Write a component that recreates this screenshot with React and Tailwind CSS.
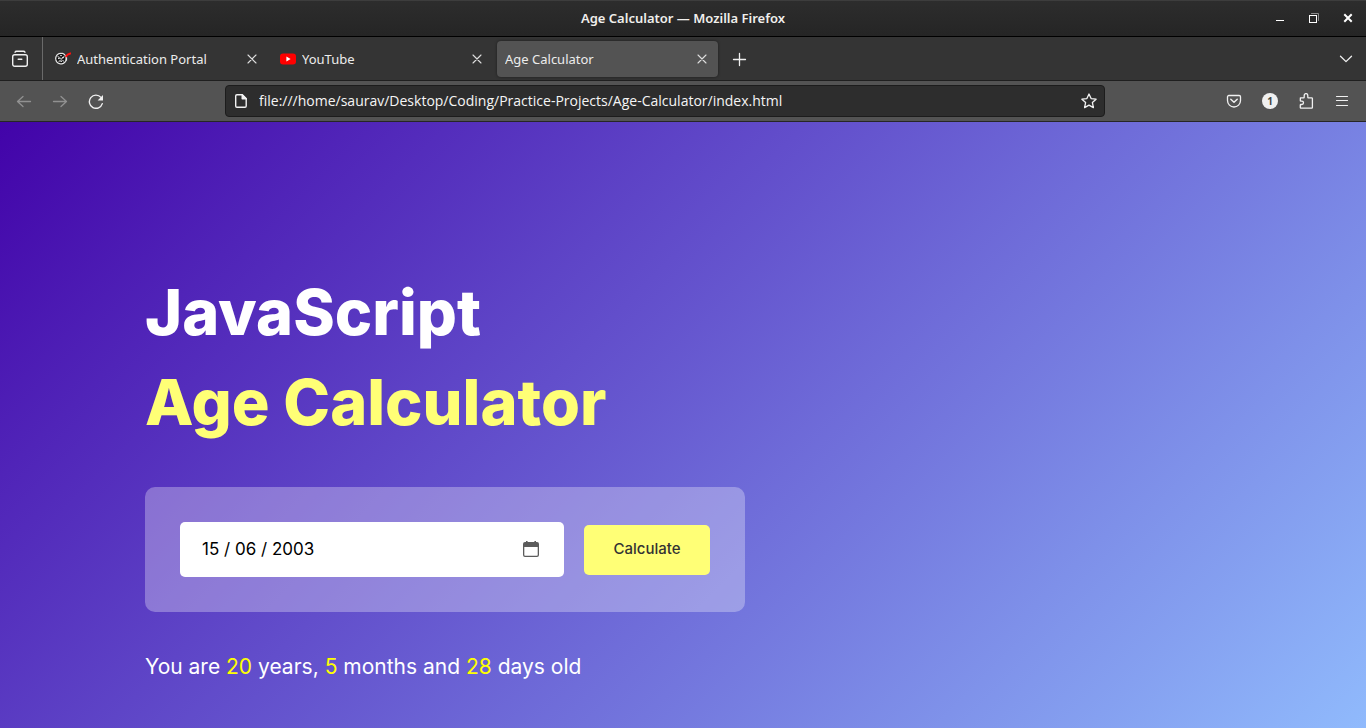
function Icon({ size = 16, children, className = "", sw = "1.2" }) {
  return (
    <svg
      width={size}
      height={size}
      viewBox={`0 0 ${size} ${size}`}
      fill="none"
      stroke="currentColor"
      strokeWidth={sw}
      strokeLinecap="round"
      strokeLinejoin="round"
      className={className}
      aria-hidden="true"
    >
      {children}
    </svg>
  );
}

const CloseGlyph = () => (
  <Icon size={16} sw="1.1">
    <path d="M4 4l8 8M12 4l-8 8" />
  </Icon>
);

const PortalGlyph = () => (
  <Icon size={16}>
    <circle cx="6" cy="7.6" r="5.3" fill="#111" stroke="#e4e4e4" strokeWidth="1.3" strokeDasharray="2.4 0.8" />
    <path d="M3 5.5l5.5 4.5M9 5.5L4 10.5" stroke="#9a9a9a" strokeWidth="1.4" />
    <path d="M3.4 7.6h.8M7.6 6.6h.8M5.6 4.6h.8M5.8 10.4h.8" stroke="#f4f4f4" strokeWidth="1" />
    <path d="M11.4 6.8V9" stroke="#e8e8e8" strokeWidth="1.4" />
    <path d="M10.6 5.8l2-2.2l3.4-1.4" stroke="#ff1010" strokeWidth="2" strokeLinecap="butt" />
  </Icon>
);

const YouTubeGlyph = () => (
  <svg width="16" height="16" viewBox="0 0 16 16" aria-hidden="true">
    <rect x="0" y="2.4" width="16" height="11.2" rx="3" fill="#ff0000" />
    <path d="M6.4 5.6v4.8L10.6 8z" fill="#fff" />
  </svg>
);

function Tab({ title, icon, active }) {
  return (
    <div
      className={
        "flex h-9 w-[221px] items-center rounded px-2 " +
        (active ? "bg-[#535353] shadow-[0_0_3px_rgba(0,0,0,0.45)]" : "")
      }
    >
      <button type="button" role="tab" aria-selected={!!active} className="flex min-w-0 flex-1 items-center gap-1.5 text-left text-[13px] leading-5 text-[#ececec]">
        {icon}
        <span className="truncate">{title}</span>
      </button>
      <button type="button" aria-label={`Close ${title}`} className="text-[#dedede]">
        <CloseGlyph />
      </button>
    </div>
  );
}

function ToolButton({ label, dim, children }) {
  return (
    <button
      type="button"
      aria-label={label}
      className={"flex size-9 items-center justify-center " + (dim ? "text-[#919191]" : "text-[#f0f0f0]")}
    >
      {children}
    </button>
  );
}

function TitleBar() {
  return (
    <header className="grid h-[37px] grid-cols-[1fr_auto_1fr] items-center border-b border-black bg-linear-to-b from-[#2d2d2d] to-[#252525] shadow-[inset_0_1px_0_#3d3d3d]">
      <span />
      <p className="text-[13px] leading-5 font-semibold text-[#f0efec]">Age Calculator — Mozilla Firefox</p>
      <div className="flex items-center justify-end gap-[18px] pr-[10px] text-white">
        <button type="button" aria-label="Minimize">
          <Icon size={16} sw="1">
            <path d="M4 10.5h8" strokeLinecap="butt" />
          </Icon>
        </button>
        <button type="button" aria-label="Restore">
          <Icon size={16} sw="1">
            <path d="M5.5 3.5h7v7" stroke="#8a8a8a" strokeLinejoin="miter" />
            <rect x="3.5" y="5.5" width="7" height="7" strokeLinejoin="miter" />
          </Icon>
        </button>
        <button type="button" aria-label="Close window">
          <Icon size={16} sw="2">
            <path d="M5 5l6 6M11 5l-6 6" strokeLinecap="square" />
          </Icon>
        </button>
      </div>
    </header>
  );
}

function TabStrip() {
  return (
    <div className="flex h-11 items-center border-b border-[#1f1f1f] bg-[#343434]">
      <button type="button" aria-label="Recent browsing" className="flex h-full w-[43px] items-center justify-center border-r border-[#6a6a6a] pr-[2px] text-[#f0f0f0]">
        <Icon size={18} sw="1.4">
          <path d="M4 2.2c.3-.7.9-1 1.6-1h6.8c.7 0 1.3.3 1.6 1" />
          <rect x="1.7" y="4.7" width="14.6" height="11.6" rx="2" />
          <path d="M7.2 9.2h3.6" />
        </Icon>
      </button>
      <div role="tablist" className="ml-1 flex gap-1">
        <Tab title="Authentication Portal" icon={<PortalGlyph />} />
        <Tab title="YouTube" icon={<YouTubeGlyph />} />
        <Tab title="Age Calculator" active />
      </div>
      <button type="button" aria-label="New tab" className="ml-[14px] text-[#f0f0f0]">
        <Icon size={16} sw="1.3">
          <path d="M7.5 2.5v12M1.5 8.5h12" />
        </Icon>
      </button>
      <button type="button" aria-label="List all tabs" className="mr-3 ml-auto text-[#f0f0f0]">
        <Icon size={16} sw="1.3">
          <path d="M2.5 5.2L8 10.6l5.5-5.4" />
        </Icon>
      </button>
    </div>
  );
}

function NavBar() {
  return (
    <nav className="flex h-[41px] items-center border-b border-[#262626] bg-[#535353] px-1.5">
      <ToolButton label="Back" dim>
        <Icon sw="1.3">
          <path d="M14.5 8.5h-13M7 3.5l-5.5 5l5.5 5" />
        </Icon>
      </ToolButton>
      <ToolButton label="Forward" dim>
        <Icon sw="1.3">
          <path d="M1.5 8.5h13M9 3.5l5.5 5l-5.5 5" />
        </Icon>
      </ToolButton>
      <ToolButton label="Reload">
        <Icon sw="1.4">
          <path d="M14.3 10.6A6.6 6.6 0 1 1 13 4.4" />
          <path d="M15 2v5.4H9.6z" fill="currentColor" stroke="none" />
        </Icon>
      </ToolButton>
      <div className="flex min-w-0 flex-1 justify-center">
        <div className="flex h-8 w-full max-w-[880px] items-center rounded border border-[#1c1c1c] bg-[#2d2d2d] px-[7px] text-[#f2f2f2]">
          <Icon sw="1.4">
            <path d="M3.9 1.7h5.3l4 4v7.4c0 .7-.5 1.2-1.2 1.2H3.9c-.7 0-1.2-.5-1.2-1.2V2.9c0-.7.5-1.2 1.2-1.2z" />
            <path d="M9.2 1.7v4h4z" fill="currentColor" />
          </Icon>
          <input
            aria-label="Address"
            defaultValue="file:///home/saurav/Desktop/Coding/Practice-Projects/Age-Calculator/index.html"
            className="ml-[10px] min-w-0 flex-1 bg-transparent font-['Open_Sans',sans-serif] text-sm text-[#f5f5f5] outline-none"
          />
          <button type="button" aria-label="Bookmark this page">
            <Icon sw="1.3">
              <path d="M8 1l2.1 4.6 5 .6-3.7 3.4 1 5L8 12.1l-4.4 2.5 1-5L.9 6.2l5-.6z" />
            </Icon>
          </button>
        </div>
      </div>
      <ToolButton label="Save to Pocket">
        <Icon sw="1.3">
          <path d="M2.8 2.5h10.4c.7 0 1.3.6 1.3 1.3v3.7a6.5 6.5 0 0 1-13 0V3.8c0-.7.6-1.3 1.3-1.3z" />
          <path d="M4.8 6.2L8 9.2l3.2-3" strokeWidth="1.5" />
        </Icon>
      </ToolButton>
      <ToolButton label="Account, 1 notice">
        <span className="flex size-4 items-center justify-center rounded-full bg-[#f0f0f0] text-[10px] leading-4 font-bold text-[#444]">1</span>
      </ToolButton>
      <ToolButton label="Extensions">
        <Icon sw="1.3">
          <path d="M2.4 4.8h3.2c.4 0 .6-.2.6-.6V2.4a1.8 1.8 0 0 1 3.6 0v1.8c0 .4.2.6.6.6h3.2c.5 0 .8.3.8.8v8.8c0 .5-.3.8-.8.8H3.1c-.5 0-.8-.3-.8-.8v-2.3c0-.4.2-.6.6-.6h.9a1.7 1.7 0 0 0 0-3.4h-.9c-.4 0-.6-.2-.6-.6z" />
        </Icon>
      </ToolButton>
      <ToolButton label="Open application menu">
        <Icon sw="1.2">
          <path d="M2.5 3.5h11M2.5 7.5h11M2.5 12.5h11" />
        </Icon>
      </ToolButton>
    </nav>
  );
}

function CalendarGlyph() {
  return (
    <svg width="16" height="18" viewBox="0 0 16 18" fill="#5c5c5c" aria-hidden="true">
      <path
        fillRule="evenodd"
        d="M3 0h1.6v1h6.8V0H13v1h1a2 2 0 0 1 2 2v11a2 2 0 0 1-2 2H2a2 2 0 0 1-2-2V3a2 2 0 0 1 2-2h1zM1.3 6v8c0 .4.3.7.7.7h12c.4 0 .7-.3.7-.7V6z"
      />
    </svg>
  );
}

function AgeCalculator() {
  return (
    <main className="flex-1 bg-[linear-gradient(135deg,#4203a9,#90bafc)] px-[145px] pt-[145px] pb-11 font-['Inter',sans-serif]">
      <div className="max-w-[600px]">
        <h1 className="text-[63px] leading-[90px] font-extrabold text-white">
          JavaScript
          <br />
          <span className="text-[#ffff76]">Age Calculator</span>
        </h1>
        <form onSubmit={(e) => e.preventDefault()} className="my-10 flex items-center gap-5 rounded-[10px] bg-white/30 p-[35px]">
          <div className="flex h-[55px] min-w-0 flex-1 items-center rounded-[5px] bg-white pr-[25px] pl-[22px]">
            <input
              type="text"
              inputMode="numeric"
              aria-label="Date of birth"
              defaultValue="15 / 06 / 2003"
              className="min-w-0 flex-1 bg-transparent text-[17px] text-black outline-none"
            />
            <button type="button" aria-label="Open date picker">
              <CalendarGlyph />
            </button>
          </div>
          <button type="submit" className="h-[50px] w-[126px] rounded-[5px] bg-[#ffff76] text-[15px] font-medium text-[#333]">
            Calculate
          </button>
        </form>
        <p className="text-[21px] leading-[30px] text-white">
          You are <span className="text-[#ffff00]">20</span> years, <span className="text-[#ffff00]">5</span> months and{" "}
          <span className="text-[#ffff00]">28</span> days old
        </p>
      </div>
    </main>
  );
}

export default function App() {
  return (
    <div className="flex min-h-screen flex-col font-['Noto_Sans',sans-serif]">
      <TitleBar />
      <TabStrip />
      <NavBar />
      <AgeCalculator />
    </div>
  );
}
